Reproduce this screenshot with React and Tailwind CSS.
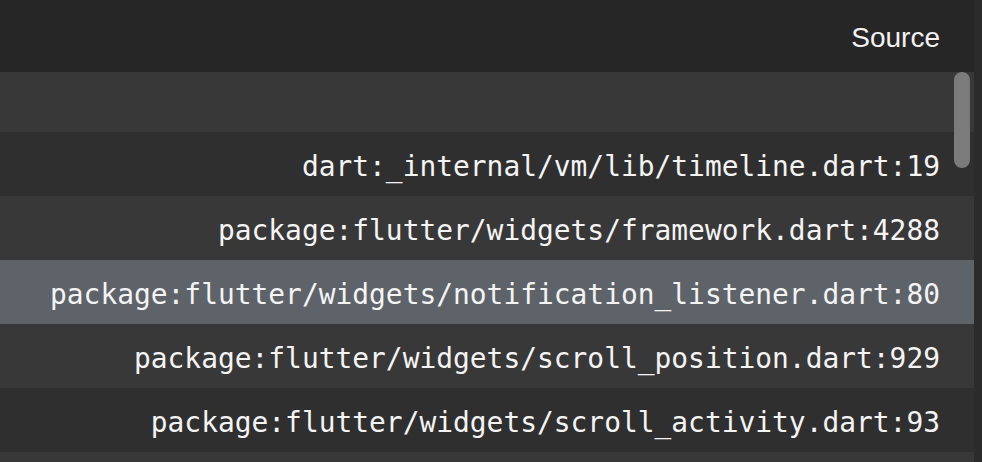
const rows = [
  { text: '', tone: 'light', h: 'h-[60px]' },
  { text: 'dart:_internal/vm/lib/timeline.dart:19', tone: 'dark' },
  { text: 'package:flutter/widgets/framework.dart:4288', tone: 'light' },
  { text: 'package:flutter/widgets/notification_listener.dart:80', tone: 'selected' },
  { text: 'package:flutter/widgets/scroll_position.dart:929', tone: 'light' },
  { text: 'package:flutter/widgets/scroll_activity.dart:93', tone: 'dark' },
  { text: '', tone: 'light' },
];

const toneClass = {
  light: 'bg-[#383838]',
  dark: 'bg-[#2f2f2f]',
  selected: 'bg-[#5e636a]',
};

export default function App() {
  return (
    <div className="relative w-[982px] h-[462px] overflow-hidden bg-[#2b2b2b] flex">
      <div className="w-[974px] flex flex-col">
        <div className="h-[72px] shrink-0 bg-[#262626] flex items-center justify-end pr-[34px] pt-[3px]">
          <span className="text-[28px] leading-[36px] text-[#f2f2f2] font-['Liberation_Sans',Arial,sans-serif]">
            Source
          </span>
        </div>
        {rows.map((r, i) => (
          <div
            key={i}
            className={`${r.h || 'h-[64px]'} shrink-0 flex items-center justify-end pr-[34px] pt-[5px] ${toneClass[r.tone]}`}
          >
            {r.text && (
              <span className="text-[27.9px] leading-[40px] text-[#f4f4f4] font-['DejaVu_Sans_Mono','Liberation_Mono',monospace] whitespace-pre">
                {r.text}
              </span>
            )}
          </div>
        ))}
      </div>
      <div className="absolute right-[12px] top-[72px] w-[16px] h-[96px] rounded-full bg-[#7b7b7b]" />
    </div>
  );
}
